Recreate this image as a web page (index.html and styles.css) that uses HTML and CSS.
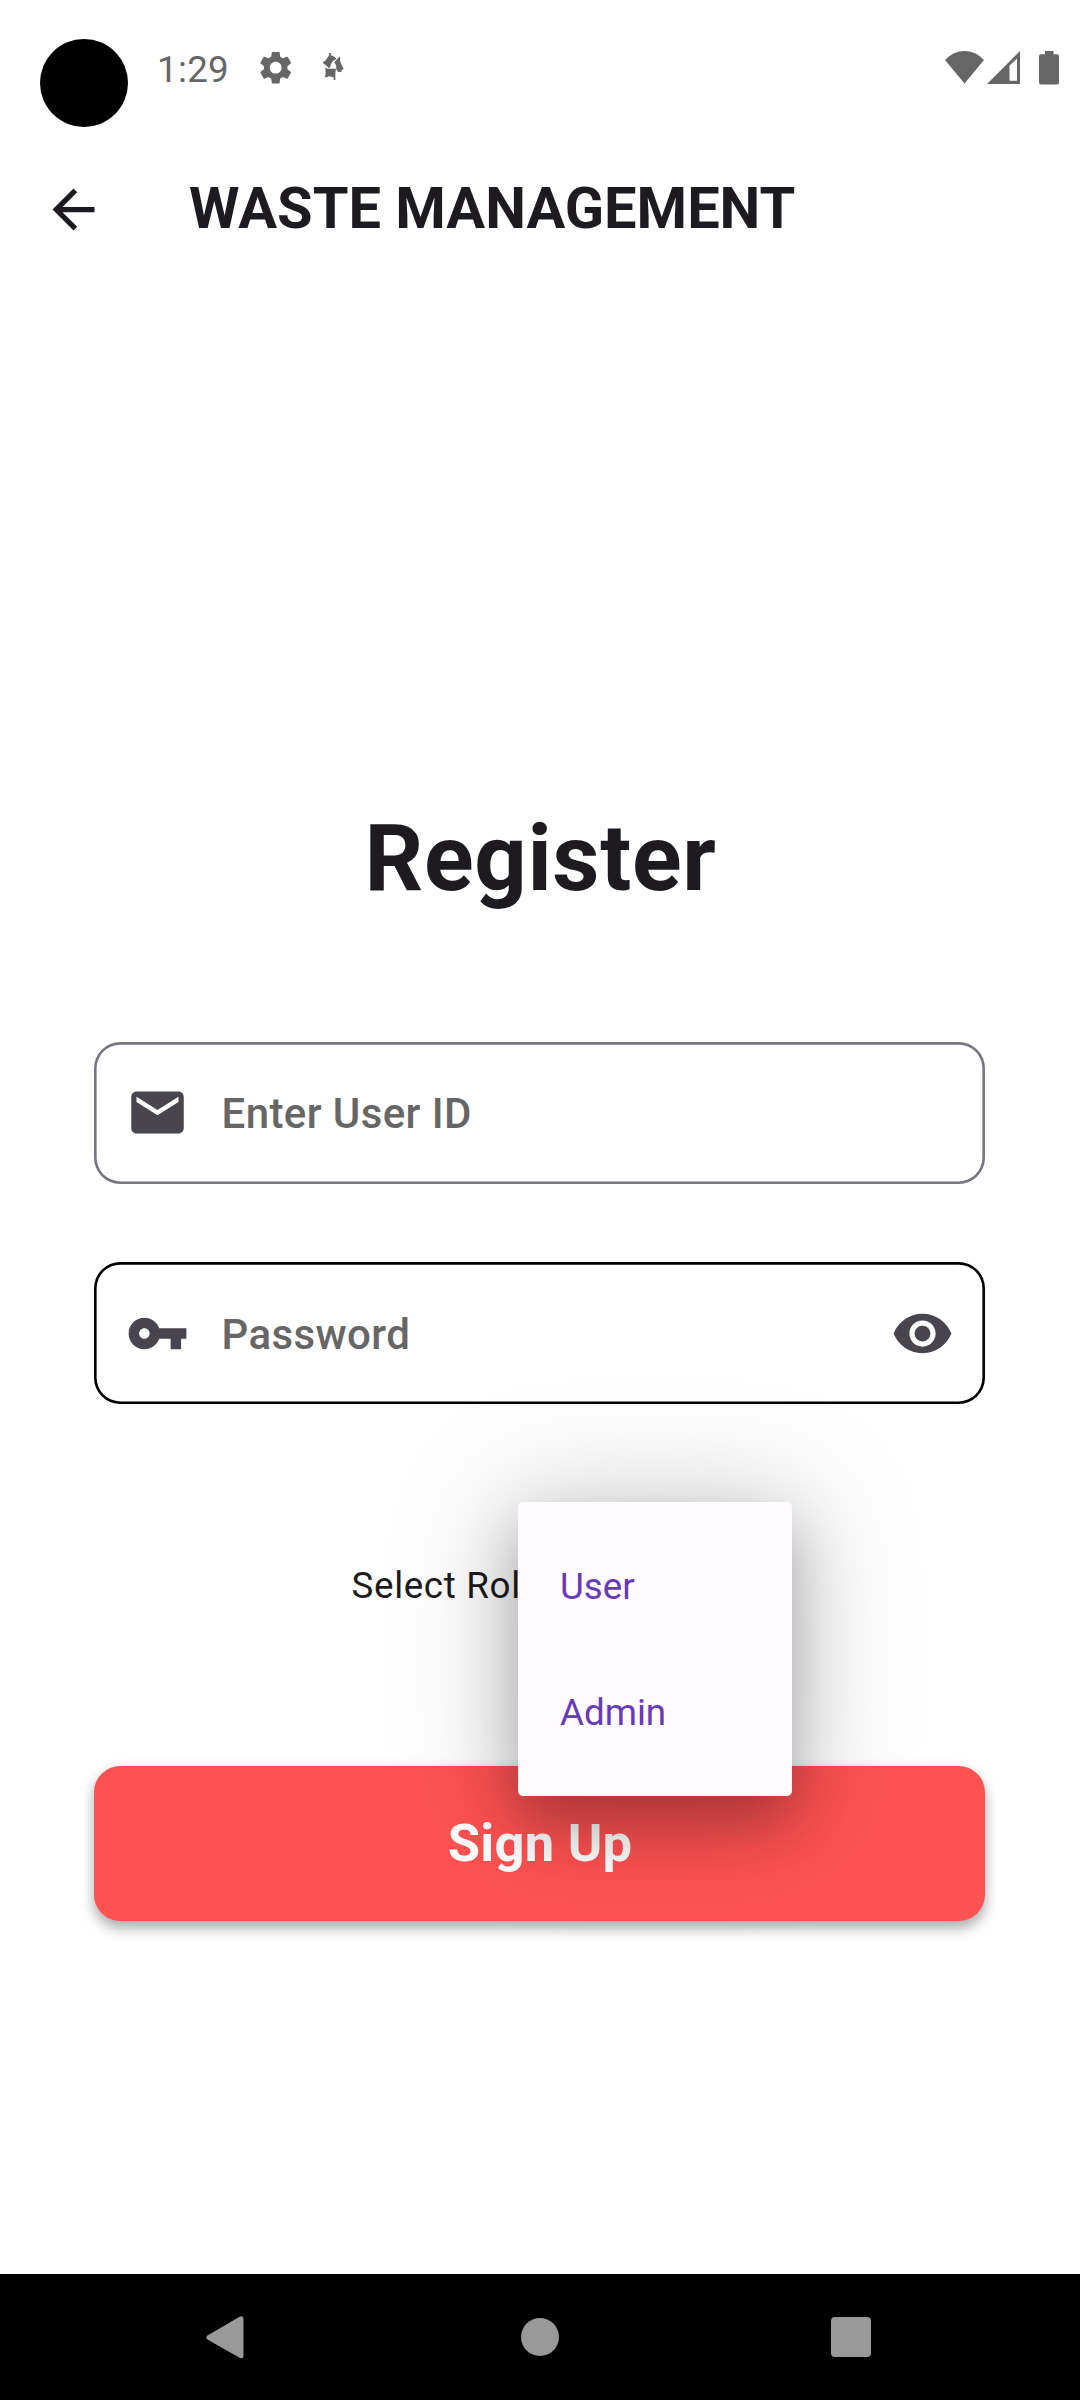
FILE: index.html
```html
<!DOCTYPE html>
<html lang="en">
<head>
<meta charset="utf-8">
<title>Waste Management</title>
<link rel="stylesheet" href="styles.css">
</head>
<body>
<div class="screen">
  <header class="status">
    <span class="camera"></span>
    <span class="time">1:29</span>
    <svg class="gear" viewBox="0 0 24 24"><path d="M19.14 12.94c.04-.3.06-.61.06-.94 0-.32-.02-.64-.07-.94l2.03-1.58c.18-.14.23-.41.12-.61l-1.92-3.32c-.12-.22-.37-.29-.59-.22l-2.39.96c-.5-.38-1.03-.7-1.62-.94l-.36-2.54c-.04-.24-.24-.41-.48-.41h-3.84c-.24 0-.43.17-.47.41l-.36 2.54c-.59.24-1.13.57-1.62.94l-2.39-.96c-.22-.08-.47 0-.59.22L2.74 8.87c-.12.21-.08.47.12.61l2.03 1.58c-.05.3-.09.63-.09.94s.02.64.07.94l-2.03 1.58c-.18.14-.23.41-.12.61l1.92 3.32c.12.22.37.29.59.22l2.39-.96c.5.38 1.03.7 1.62.94l.36 2.54c.05.24.24.41.48.41h3.84c.24 0 .44-.17.47-.41l.36-2.54c.59-.24 1.13-.56 1.62-.94l2.39.96c.22.08.47 0 .59-.22l1.92-3.32c.12-.22.07-.47-.12-.61l-2.01-1.58zM12 15.6c-1.98 0-3.6-1.62-3.6-3.6s1.62-3.6 3.6-3.6 3.6 1.62 3.6 3.6-1.62 3.6-3.6 3.6z"/></svg>
    <svg class="pinwheel" viewBox="966 98 66 86"><path d="M987 101h6v7l12 5 4 6-10 6-6 9-2 9-5 3-9-9-8-5 1-5 6-3 7-10 5-6z"/><path d="M1018 112l3 3-1 9 5 14 5 7v6h-5l-1 6-9 2-6-9-1-12-5-9z"/><path d="M976 145l7 3h25l-2 14v20h-5v-8l-14-3-8 3h-5l3-9z"/><circle class="hub" cx="998" cy="140" r="4.500"/></svg>
    <span class="signals">
      <svg class="wifi" viewBox="0 0 39 33"><path d="M0 9Q8.500 0 19.500 0T39 9L19.500 32.500z"/></svg>
      <svg class="cell" viewBox="0 0 33 33"><path fill-rule="evenodd" d="M33 0v33H0zM22.500 14.500V29.700H30V7.500z"/></svg>
      <svg class="battery" viewBox="0 0 20 34"><path d="M6 0h8.500v3.300H18a2 2 0 0 1 2 2V31.500a2 2 0 0 1-2 2H2a2 2 0 0 1-2-2V5.300a2 2 0 0 1 2-2h4z"/></svg>
    </span>
  </header>

  <div class="appbar">
    <svg class="icon back" viewBox="0 0 24 24"><path d="M20 11H7.830l5.590-5.590L12 4l-8 8 8 8 1.410-1.410L7.830 13H20v-2z"/></svg>
    <h1 class="title">WASTE MANAGEMENT</h1>
  </div>

  <main class="form">
    <h2 class="heading">Register</h2>
    <div class="field">
      <svg class="icon" viewBox="0 0 24 24"><path d="M20 4H4c-1.100 0-1.990.9-1.990 2L2 18c0 1.100.9 2 2 2h16c1.100 0 2-.9 2-2V6c0-1.100-.9-2-2-2zm0 4l-8 5-8-5V6l8 5 8-5v2z"/></svg>
      <span class="hint">Enter User ID</span>
    </div>
    <div class="field field-dark">
      <svg class="icon" viewBox="0 0 24 24"><path d="M12.650 10C11.830 7.670 9.610 6 7 6c-3.310 0-6 2.690-6 6s2.690 6 6 6c2.610 0 4.830-1.670 5.650-4H17v4h4v-4h2v-4H12.650zM7 14c-1.100 0-2-.9-2-2s.9-2 2-2 2 .9 2 2-.9 2-2 2z"/></svg>
      <span class="hint">Password</span>
      <svg class="icon" viewBox="0 0 24 24"><path d="M12 4.500C7 4.500 2.730 7.610 1 12c1.730 4.390 6 7.500 11 7.500s9.270-3.110 11-7.500c-1.730-4.390-6-7.500-11-7.500zM12 17c-2.760 0-5-2.240-5-5s2.240-5 5-5 5 2.240 5 5-2.240 5-5 5zm0-8c-1.660 0-3 1.340-3 3s1.340 3 3 3 3-1.340 3-3-1.340-3-3-3z"/></svg>
    </div>
    <div class="role">
      <span class="role-label">Select Role</span>
      <div class="menu">
        <span class="option">User</span>
        <span class="option">Admin</span>
      </div>
    </div>
    <div class="button">Sign Up</div>
  </main>

  <nav class="navbar">
    <svg class="nav-back" viewBox="0 0 38 43"><path d="M33.500.8Q37.500-.8 37.500 3V40Q37.500 43.500 33.500 41.800L1.500 23.500Q-.8 21.500 1.500 19.500z"/></svg>
    <span class="nav-home"></span>
    <span class="nav-recent"></span>
  </nav>
</div>
</body>
</html>
```

FILE: styles.css
```css
* { box-sizing: border-box; }

body {
  margin: 0;
  background: #fff;
  font-family: Roboto, "Liberation Sans", sans-serif;
  color: #1d1b20;
}

.screen {
  width: 1080px;
  height: 2400px;
  display: flex;
  flex-direction: column;
  overflow: hidden;
}

svg { display: block; flex: none; }

/* status bar */
.status {
  height: 136px;
  padding: 39px 21px 0 40px;
  display: flex;
  align-items: flex-start;
  fill: #666;
  color: #666;
}
.camera { width: 88px; height: 88px; border-radius: 50%; background: #000; }
.time { margin: 9px 0 0 29px; width: 79px; font-size: 36.75px; line-height: 43px; letter-spacing: 0.3px; }
.gear { width: 39.4px; height: 39.4px; margin: 9.300px 0 0 20.300px; }
.pinwheel { width: 22px; height: 28.670px; margin: 13.300px 0 0 26.300px; }
.hub { fill: none; stroke: #fff; stroke-width: 3; }
.signals { margin: 12px 0 0 auto; display: flex; }
.wifi { width: 39px; height: 33px; }
.cell { width: 33px; height: 33px; margin-left: 3px; }
.battery { width: 20px; height: 34px; margin-left: 19px; }

/* app bar */
.appbar { height: 147px; padding-left: 42px; display: flex; align-items: center; }
.icon { width: 63px; height: 63px; fill: #49454f; }
.back { fill: #1d1b20; }
.title { margin: 0 0 4px 84px; font-size: 57.75px; line-height: 74px; font-weight: 700; white-space: nowrap; }

/* form */
.form { flex: 1; padding: 521px 95px 0 94px; display: flex; flex-direction: column; }
.heading { margin: 0; padding-left: 2px; font-size: 91.875px; line-height: 109px; font-weight: 700; letter-spacing: 0.660px; text-align: center; }
.field {
  height: 141.500px;
  margin-top: 129px;
  padding: 0 31px 0 32px;
  display: flex;
  align-items: center;
  border-radius: 26.250px;
  box-shadow: inset 0 0 0 2.625px #79747e;
}
.field-dark { height: 142px; margin-top: 78.500px; box-shadow: inset 0 0 0 2.625px #000; }
.hint {
  flex: 1;
  margin-left: 32.500px;
  padding-top: 1.500px;
  font-size: 42px;
  line-height: 63px;
  font-weight: 500;
  letter-spacing: 0.400px;
  color: #666;
}
.field-dark .hint { padding-top: 2px; }
.role { position: relative; height: 126px; margin-top: 118px; padding-left: 257.500px; }
.role-label { font-size: 36.750px; line-height: 128px; letter-spacing: 0.660px; }
.menu {
  position: absolute;
  left: 424px;
  top: -20px;
  width: 274px;
  height: 294px;
  padding: 22px 42px 20px;
  border-radius: 5.250px;
  background: #fffbfe;
  box-shadow: 0 28px 56px rgba(0, 0, 0, 0.230), 0 10px 120px 16px rgba(0, 0, 0, 0.190);
  display: flex;
  flex-direction: column;
}
.option { height: 126px; line-height: 126px; font-size: 36.750px; color: #673ab7; }
.button {
  height: 155px;
  margin-top: 118px;
  padding-left: 1px;
  border-radius: 26.250px;
  background: #ff5252;
  color: #fff;
  font-size: 52.500px;
  line-height: 154px;
  font-weight: 700;
  letter-spacing: 0.260px;
  text-align: center;
  box-shadow: 0 8px 13px rgba(0, 0, 0, 0.260), 0 3px 14px rgba(0, 0, 0, 0.100);
}

/* navigation bar */
.navbar {
  height: 126px;
  padding: 0 209px 0 206px;
  display: flex;
  align-items: center;
  background: #000;
  fill: #999;
}
.nav-back { width: 38px; height: 43px; }
.nav-home { width: 38.500px; height: 38.500px; margin-left: 276.500px; border-radius: 50%; background: #999; }
.nav-recent { width: 40px; height: 40px; margin-left: auto; border-radius: 4px; background: #999; }
```
